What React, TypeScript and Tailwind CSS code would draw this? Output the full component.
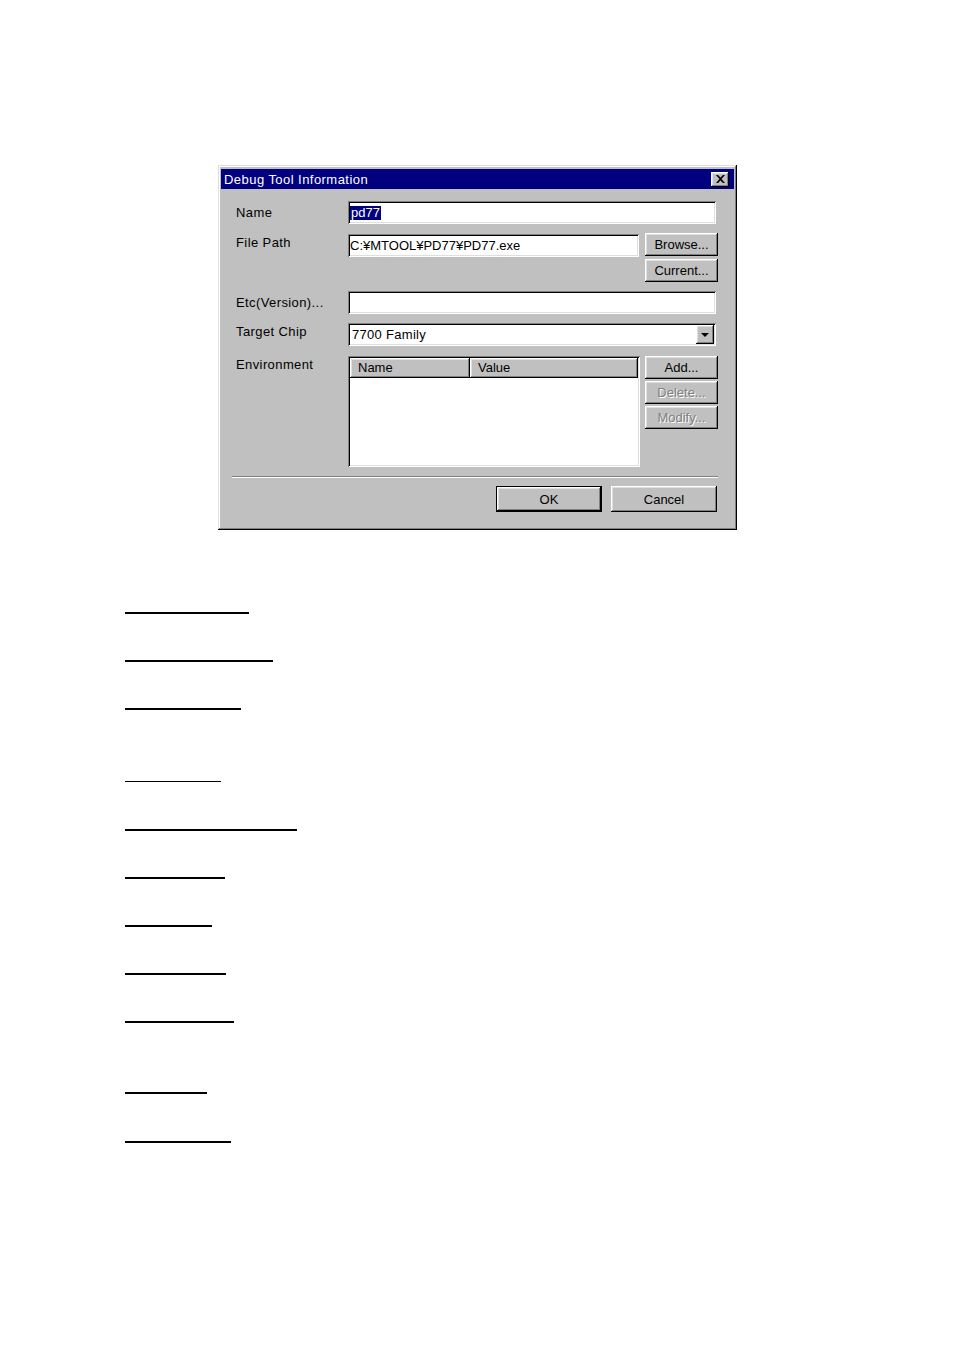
import React from 'react';

const raised =
  'bg-[#c0c0c0] shadow-[inset_-1px_-1px_0_#000,inset_1px_1px_0_#fff,inset_-2px_-2px_0_#808080,inset_2px_2px_0_#dfdfdf]';
const sunken =
  'bg-white shadow-[inset_1px_1px_0_#808080,inset_-1px_-1px_0_#fff,inset_2px_2px_0_#000,inset_-2px_-2px_0_#dfdfdf]';

const Button: React.FC<{ label: string; disabled?: boolean; className?: string }> = ({ label, disabled, className }) => (
  <div
    className={`${raised} flex items-center justify-center text-[13px] leading-none ${
      disabled ? 'text-[#808080] [text-shadow:1px_1px_0_#fff]' : 'text-black'
    } ${className ?? ''}`}
  >
    {label}
  </div>
);

const Label: React.FC<{ text: string; className?: string }> = ({ text, className }) => (
  <div className={`w-[112px] shrink-0 text-[13px] leading-[18px] tracking-[0.4px] text-black ${className ?? ''}`}>
    {text}
  </div>
);

// underline rules below the dialog
const rules = [
  'mt-[82px] w-[124px] h-[2px]',
  'mt-[46px] w-[148px] h-[2px]',
  'mt-[46px] w-[116px] h-[2px]',
  'mt-[71px] w-[96px] h-[1px]',
  'mt-[47px] w-[172px] h-[2px]',
  'mt-[46px] w-[100px] h-[2px]',
  'mt-[46px] w-[87px] h-[2px]',
  'mt-[46px] w-[101px] h-[2px]',
  'mt-[46px] w-[109px] h-[2px]',
  'mt-[69px] w-[82px] h-[2px]',
  'mt-[47px] w-[106px] h-[2px]',
];

export default function App() {
  return (
    <div className="min-h-[1350px] bg-white pt-[165px] font-['Liberation_Sans',Arial,sans-serif]">
      <div className="pl-[218px]">
        <div className="w-[519px] h-[365px] bg-[#c0c0c0] pt-[4px] px-[3px] flex flex-col shadow-[inset_-1px_-1px_0_#000,inset_1px_1px_0_#dfdfdf,inset_-2px_-2px_0_#808080,inset_2px_2px_0_#fff]">
          {/* title bar */}
          <div className="h-[20px] bg-[#000080] flex items-center justify-between pl-[3px] pr-[5px]">
            <span className="text-white text-[13px] leading-none tracking-[0.45px]">Debug Tool Information</span>
            <div className={`${raised} w-[18px] h-[15px] flex items-center justify-center`}>
              <svg width="9" height="8" viewBox="0 0 9 8">
                <path d="M0 0h2l2.5 2.5L7 0h2L5.5 4 9 8H7L4.5 5.5 2 8H0l3.5-4z" fill="#000" />
              </svg>
            </div>
          </div>

          <div className="pl-[15px] flex flex-col">
            {/* Name */}
            <div className="flex mt-[12px]">
              <Label text="Name" className="pt-[3px]" />
              <div className={`${sunken} w-[368px] h-[23px] flex items-center pl-[2px]`}>
                <span className="bg-[#000080] text-white text-[13px] leading-[14px] px-[1px]">pd77</span>
              </div>
            </div>

            {/* File Path */}
            <div className="flex mt-[10px]">
              <Label text="File Path" />
              <div className={`${sunken} w-[291px] h-[23px] flex items-center pl-[2px] text-[13px]`}>
                C:¥MTOOL¥PD77¥PD77.exe
              </div>
              <div className="ml-[6px] -mt-[1px] flex flex-col gap-[3px]">
                <Button label="Browse..." className="w-[73px] h-[23px]" />
                <Button label="Current..." className="w-[73px] h-[23px]" />
              </div>
            </div>

            {/* Etc */}
            <div className="flex mt-[9px]">
              <Label text="Etc(Version)..." className="pt-[3px]" />
              <div className={`${sunken} w-[368px] h-[23px]`} />
            </div>

            {/* Target Chip */}
            <div className="flex mt-[9px]">
              <Label text="Target Chip" />
              <div className={`${sunken} w-[368px] h-[23px] flex items-center justify-between pl-[4px] pr-[2px]`}>
                <span className="text-[13px] tracking-[0.3px]">7700 Family</span>
                <div className={`${raised} w-[18px] h-[19px] flex items-center justify-center`}>
                  <svg width="8" height="4" viewBox="0 0 8 4">
                    <path d="M0 0h8L4 4z" fill="#000" />
                  </svg>
                </div>
              </div>
            </div>

            {/* Environment */}
            <div className="flex mt-[10px]">
              <Label text="Environment" />
              <div className={`${sunken} w-[292px] h-[111px] p-[2px]`}>
                <div className="flex h-[20px]">
                  <div className={`${raised} w-[120px] flex items-center pl-[8px] text-[13px]`}>Name</div>
                  <div className={`${raised} flex-1 flex items-center pl-[8px] text-[13px]`}>Value</div>
                </div>
              </div>
              <div className="ml-[5px] flex flex-col gap-[2px]">
                <Button label="Add..." className="w-[73px] h-[23px]" />
                <Button label="Delete..." disabled className="w-[73px] h-[23px]" />
                <Button label="Modify..." disabled className="w-[73px] h-[23px]" />
              </div>
            </div>

            {/* separator */}
            <div className="mt-[9px] w-[486px] -ml-[4px] border-t border-t-[#808080] border-b border-b-white" />

            {/* OK / Cancel */}
            <div className="flex mt-[8px] pl-[260px] gap-[9px]">
              <div className="w-[106px] h-[26px] border border-black">
                <Button label="OK" className="w-full h-full" />
              </div>
              <Button label="Cancel" className="w-[106px] h-[26px]" />
            </div>
          </div>
        </div>
      </div>

      <div className="pl-[125px] flex flex-col">
        {rules.map((cls, i) => (
          <div key={i} className={`${cls} bg-black`} />
        ))}
      </div>
    </div>
  );
}
